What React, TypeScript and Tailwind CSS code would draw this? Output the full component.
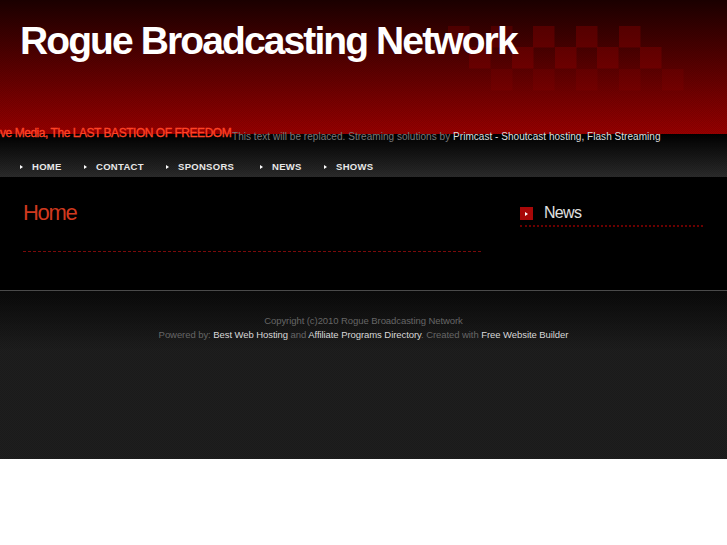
const navItems = [
  { label: "HOME", width: "w-[64px]" },
  { label: "CONTACT", width: "w-[82px]" },
  { label: "SPONSORS", width: "w-[94px]" },
  { label: "NEWS", width: "w-[64px]" },
  { label: "SHOWS", width: "w-[70px]" },
];

const squares = [
  [448, 26, 0.25], [491, 26, 0.25], [533, 26, 0.32], [576, 26, 0.32], [619, 26, 0.32],
  [469, 47, 0.25], [512, 47, 0.3], [555, 47, 0.3], [597, 47, 0.3], [640, 47, 0.3],
  [491, 69, 0.15], [533, 69, 0.15], [576, 69, 0.15], [619, 69, 0.15], [662, 69, 0.15],
];

function Checkers() {
  return (
    <svg className="absolute left-0 top-0" width="727" height="134" aria-hidden="true">
      {squares.map(([x, y, o]) => (
        <rect key={`${x}-${y}`} x={x} y={y} width="21.5" height="21.5" fill="#a00000" opacity={o} />
      ))}
    </svg>
  );
}

export default function App() {
  return (
    <div className="w-[727px] h-[545px] overflow-hidden bg-white font-['Liberation_Sans',Arial,sans-serif]">
      <header className="relative h-[134px] [background-size:2px_2px,auto] bg-[repeating-conic-gradient(#00000018_0_25%,transparent_0_50%),linear-gradient(to_bottom,#1c0000,#980000)]">
        <Checkers />
        <h1 className="relative pl-[20px] pt-[17px] text-[39px] leading-[48px] font-bold tracking-[-1.9px] text-white">
          Rogue Broadcasting Network
        </h1>
      </header>

      <nav className="relative h-[43px] [background-size:2px_2px,auto] bg-[repeating-conic-gradient(#00000020_0_25%,transparent_0_50%),linear-gradient(to_bottom,#000000,#2c2c2c)]">
        <div className="absolute left-0 top-[-8px] flex whitespace-nowrap">
          <div className="w-[232px] text-[12px] leading-[15px] tracking-[-0.46px] text-[#ff4326] [-webkit-text-stroke:0.3px_#ff4326]">
            ve Media, The LAST BASTION OF FREEDOM
          </div>
          <div className="pt-[3px] text-[10px] leading-[15px] tracking-[0.04px] text-[#787878]">
            This text will be replaced. Streaming solutions by{" "}
            <span className="text-[#dddddd]">Primcast - Shoutcast hosting, Flash Streaming</span>
          </div>
        </div>
        <ul className="flex pl-[20px] pt-[26px]">
          {navItems.map((item) => (
            <li key={item.label} className={`${item.width} flex items-center text-[9.5px] leading-[13px] font-bold tracking-[0.3px] text-[#e8e8e8]`}>
              <span className="mr-[9px] w-0 h-0 border-y-[2.5px] border-y-transparent border-l-[3px] border-l-white" />
              {item.label}
            </li>
          ))}
        </ul>
      </nav>

      <main className="flex h-[113px] bg-black">
        <section className="ml-[23px] w-[458px]">
          <h2 className="pt-[24px] h-[75px] text-[22px] leading-[24px] tracking-[-1.3px] text-[#d0391f] border-b border-dashed border-[#7a0a0a]">
            Home
          </h2>
        </section>
        <aside className="ml-[39px] w-[183px]">
          <div className="mt-[26px] h-[24px] flex items-start border-b-2 border-dotted border-[#6a0000]">
            <span className="mt-[4px] w-[13px] h-[13px] bg-[#a80808] flex items-center justify-center">
              <span className="w-0 h-0 border-y-[2.5px] border-y-transparent border-l-[3px] border-l-white" />
            </span>
            <span className="ml-[11px] text-[16px] leading-[20px] tracking-[-0.7px] text-[#e0e0e0]">News</span>
          </div>
        </aside>
      </main>

      <footer className="h-[169px] border-t border-[#4a4a4a] [background-size:2px_2px,auto] bg-[repeating-conic-gradient(#00000020_0_25%,transparent_0_50%),linear-gradient(to_bottom,#0a0a0a,#1e1e1e_35%)] pt-[23px] text-center text-[9.5px] leading-[14px] tracking-[-0.07px] text-[#666666]">
        <p>Copyright (c)2010 Rogue Broadcasting Network</p>
        <p>
          Powered by: <span className="text-[#d8d8d8]">Best Web Hosting</span> and{" "}
          <span className="text-[#d8d8d8]">Affiliate Programs Directory</span>. Created with{" "}
          <span className="text-[#d8d8d8]">Free Website Builder</span>
        </p>
      </footer>
    </div>
  );
}
